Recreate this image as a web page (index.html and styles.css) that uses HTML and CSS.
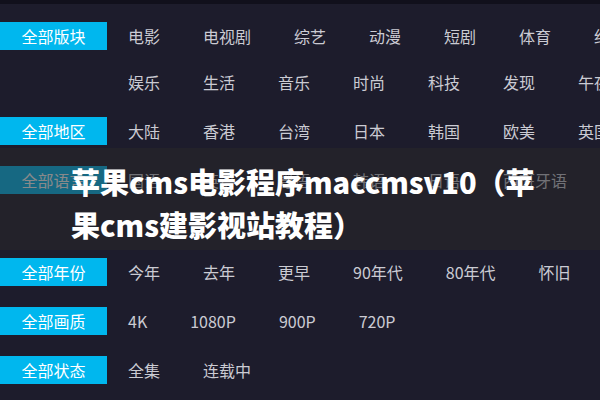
FILE: index.html
```html
<!DOCTYPE html>
<html lang="zh-CN">
<head>
<meta charset="utf-8">
<title>苹果cms电影程序maccmsv10</title>
<link rel="stylesheet" href="styles.css">
</head>
<body>
<div class="strip"></div>
<div class="page">
  <div class="row">
    <div class="label">全部版块</div>
    <div class="items">
      <span class="item">电影</span><span class="item">电视剧</span><span class="item">综艺</span><span class="item">动漫</span><span class="item">短剧</span><span class="item">体育</span><span class="item">纪录片</span>
      <span class="item">娱乐</span><span class="item">生活</span><span class="item">音乐</span><span class="item">时尚</span><span class="item">科技</span><span class="item">发现</span><span class="item">午夜</span>
    </div>
  </div>
  <div class="row">
    <div class="label">全部地区</div>
    <div class="items">
      <span class="item">大陆</span><span class="item">香港</span><span class="item">台湾</span><span class="item">日本</span><span class="item">韩国</span><span class="item">欧美</span><span class="item">英国</span>
    </div>
  </div>
  <div class="row tall">
    <div class="label">全部语言</div>
    <div class="items">
      <span class="item">国语</span><span class="item">英语</span><span class="item">粤语</span><span class="item">韩语</span><span class="item">日语</span><span class="item">西班牙语</span>
    </div>
  </div>
  <div class="row">
    <div class="label">全部年份</div>
    <div class="items">
      <span class="item">今年</span><span class="item">去年</span><span class="item">更早</span><span class="item">90年代</span><span class="item">80年代</span><span class="item">怀旧</span>
    </div>
  </div>
  <div class="row">
    <div class="label">全部画质</div>
    <div class="items">
      <span class="item">4K</span><span class="item">1080P</span><span class="item">900P</span><span class="item">720P</span>
    </div>
  </div>
  <div class="row">
    <div class="label">全部状态</div>
    <div class="items">
      <span class="item">全集</span><span class="item">连载中</span>
    </div>
  </div>
</div>
<div class="banner">
  <h1 class="title">苹果cms电影程序maccmsv10（苹<br>果cms建影视站教程）</h1>
</div>
</body>
</html>
```

FILE: styles.css
```css
html, body {
  margin: 0;
  padding: 0;
}
body {
  width: 600px;
  height: 400px;
  overflow: hidden;
  background: #1d1c2c;
  font-family: "Noto Sans CJK SC", "Noto Sans", sans-serif;
  position: relative;
}
.strip {
  height: 4px;
  background: #11101c;
}
.page {
  width: 680px;
  padding-top: 9px;
}
.row {
  display: flex;
  align-items: flex-start;
  margin-bottom: 3px;
}
.row.tall {
  min-height: 89px;
}
.label {
  flex: 0 0 107px;
  height: 28px;
  margin-top: 9px;
  background: #00b7ee;
  color: #ffffff;
  font-size: 16px;
  line-height: 28px;
  text-align: center;
}
.items {
  flex: 1;
  display: flex;
  flex-wrap: wrap;
  column-gap: 43px;
  padding-left: 21px;
}
.item {
  font-size: 16px;
  line-height: 46px;
  color: #cbcbd3;
  white-space: nowrap;
}
.banner {
  position: absolute;
  left: 0;
  right: 0;
  top: 148px;
  height: 102px;
  background: rgba(40, 40, 42, 0.55);
}
.title {
  margin: 0;
  padding: 12px 0 0 71px;
  font-size: 29px;
  font-weight: 900;
  line-height: 43px;
  color: #ffffff;
  white-space: nowrap;
}
```
